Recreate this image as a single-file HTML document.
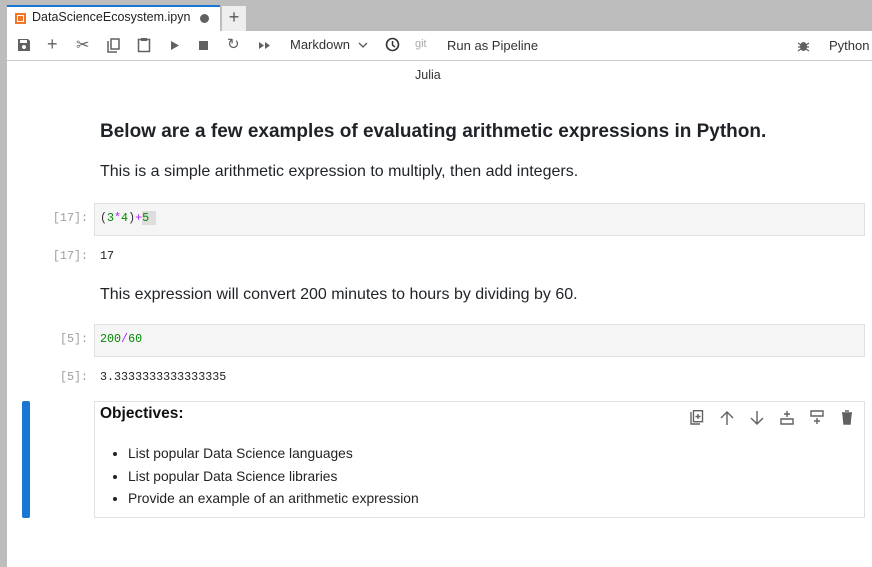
<!DOCTYPE html>
<html><head><meta charset="utf-8"><style>
*{margin:0;padding:0;box-sizing:border-box}
body{width:872px;height:567px;overflow:hidden;background:#fff;font-family:"Liberation Sans",sans-serif;position:relative;color:#212121}
.a{position:absolute;white-space:nowrap}
.mono{font-family:"Liberation Mono",monospace;font-size:11.7px}
.pr{color:#9e9e9e;text-align:right;width:80px;left:8px}
.md{font-size:16px;color:#1f2328}
.cell{position:absolute;left:94px;width:771px;height:33px;background:#f5f5f5;border:1px solid #e0e0e0}
svg{position:absolute}
</style></head><body>
<div class="a" style="left:0;top:0;width:872px;height:31px;background:#bdbdbd"></div>
<div class="a" style="left:0;top:0;width:7px;height:567px;background:#bdbdbd"></div>
<div class="a" style="left:7px;top:5px;width:213px;height:26px;background:#fff;border-top:2px solid #1976d2"></div>
<div class="a" style="left:15px;top:13px;width:11px;height:11px;border:2px solid #f37626;background:#fff"><div style="margin:1px;width:5px;height:5px;background:#f37626"></div></div>
<div class="a" style="left:32px;top:10px;font-size:12.5px;color:#222">DataScienceEcosystem.ipyn</div>
<div class="a" style="left:200px;top:14px;width:9px;height:9px;border-radius:50%;background:#616161"></div>
<div class="a" style="left:222px;top:6px;width:24px;height:25px;background:#eee;text-align:center;font-size:18px;line-height:22px;color:#555">+</div>
<div class="a" style="left:7px;top:31px;width:865px;height:30px;background:#fff;border-bottom:1px solid #ccc"></div>
<svg style="left:17px;top:38px" width="14" height="14"><path d="M1 1h10l2 2v10H1z" fill="#616161"/><rect x="3" y="2" width="7" height="3" fill="#fff"/><circle cx="7" cy="9" r="2" fill="#fff"/></svg>
<div class="a" style="left:47px;top:34px;font-size:18px;color:#616161">+</div>
<div class="a" style="left:76px;top:35px;font-size:16px;color:#616161">✂</div>
<svg style="left:107px;top:38px" width="13" height="15"><path d="M1 3v11h9" fill="none" stroke="#616161" stroke-width="1.5"/><rect x="4" y="1" width="8" height="10" fill="none" stroke="#616161" stroke-width="1.5"/></svg>
<svg style="left:137px;top:37px" width="14" height="16"><rect x="1.5" y="2.5" width="11" height="12" fill="none" stroke="#616161" stroke-width="1.5"/><rect x="4" y="1" width="6" height="3" fill="#616161"/></svg>
<svg style="left:170px;top:40px" width="10" height="11"><path d="M1 1l8 4.5L1 10z" fill="#616161"/></svg>
<div class="a" style="left:199px;top:41px;width:9px;height:9px;background:#616161"></div>
<div class="a" style="left:227px;top:35px;font-size:15px;color:#616161">↻</div>
<svg style="left:258px;top:41px" width="14" height="9"><path d="M1 1l5 3.5L1 8zM7 1l5 3.5L7 8z" fill="#616161"/></svg>
<div class="a" style="left:290px;top:37px;font-size:13px;color:#333">Markdown</div>
<svg style="left:358px;top:42px" width="10" height="7"><path d="M1 1l4 4 4-4" fill="none" stroke="#555" stroke-width="1.3"/></svg>
<svg style="left:385px;top:37px" width="15" height="15"><circle cx="7.5" cy="7.5" r="6" fill="none" stroke="#333" stroke-width="1.6"/><path d="M7.5 4v4l2.5 2" fill="none" stroke="#333" stroke-width="1.5"/></svg>
<div class="a" style="left:415px;top:38px;font-size:11px;color:#aaa">git</div>
<div class="a" style="left:447px;top:38px;font-size:13px;color:#333">Run as Pipeline</div>
<svg style="left:797px;top:39px" width="13" height="13"><ellipse cx="6.5" cy="7.5" rx="3.5" ry="4.5" fill="#616161"/><path d="M1 4l3 2M12 4l-3 2M1 8h3M12 8H9M1 12l3-2M12 12l-3-2" stroke="#616161" stroke-width="1.3"/></svg>
<div class="a" style="left:829px;top:38px;font-size:13px;color:#333">Python</div>

<div class="a" style="left:415px;top:68px;font-size:12.5px;color:#333">Julia</div>
<div class="a" style="left:100px;top:121px;font-size:19px;font-weight:bold;color:#1f2328">Below are a few examples of evaluating arithmetic expressions in Python.</div>
<div class="a md" style="left:100px;top:163px">This is a simple arithmetic expression to multiply, then add integers.</div>

<div class="a mono pr" style="top:211px">[17]:</div>
<div class="cell" style="top:203px"></div>
<div class="a mono" style="left:100px;top:211px"><span style="color:#333">(</span><span style="color:#080">3</span><span style="color:#a2f">*</span><span style="color:#080">4</span><span style="color:#333">)</span><span style="color:#a2f">+</span><span style="color:#080;background:#ddd">5&nbsp;</span></div>
<div class="a mono pr" style="top:249px">[17]:</div>
<div class="a mono" style="left:100px;top:249px">17</div>
<div class="a md" style="left:100px;top:286px">This expression will convert 200 minutes to hours by dividing by 60.</div>
<div class="a mono pr" style="top:332px">[5]:</div>
<div class="cell" style="top:324px"></div>
<div class="a mono" style="left:100px;top:332px"><span style="color:#080">200</span><span style="color:#a2f">/</span><span style="color:#080">60</span></div>
<div class="a mono pr" style="top:370px">[5]:</div>
<div class="a mono" style="left:100px;top:370px">3.3333333333333335</div>

<div class="a" style="left:22px;top:401px;width:8px;height:117px;background:#1976d2;border-radius:2px"></div>
<div class="a" style="left:94px;top:401px;width:771px;height:117px;border:1px solid #e0e0e0"></div>
<div class="a" style="left:100px;top:405px;font-size:15.5px;font-weight:bold;color:#111">Objectives:</div>
<ul class="a" style="left:128px;top:443px;font-size:13.8px;color:#222;line-height:22.5px;list-style:disc">
<li>List popular Data Science languages</li><li>List popular Data Science libraries</li><li>Provide an example of an arithmetic expression</li></ul>
<svg style="left:690px;top:410px" width="170" height="16" fill="none" stroke="#616161" stroke-width="1.4">
<path d="M1 2v12h9"/><rect x="3.5" y="0.7" width="9" height="11"/><path d="M8 4v5M5.5 6.5h5"/>
<path d="M37 15V2M31 8l6-6 6 6"/>
<path d="M67 1v13M61 8l6 6 6-6"/>
<path d="M91 9h12v5H91zM97 1v6M94 4h6"/>
<path d="M121 1h12v5h-12zM127 8v6M124 11h6"/>
<path d="M152 3h10M155 1h4" /><path d="M153 4h8l-1 10h-6z" fill="#616161"/>
</svg>
</body></html>
